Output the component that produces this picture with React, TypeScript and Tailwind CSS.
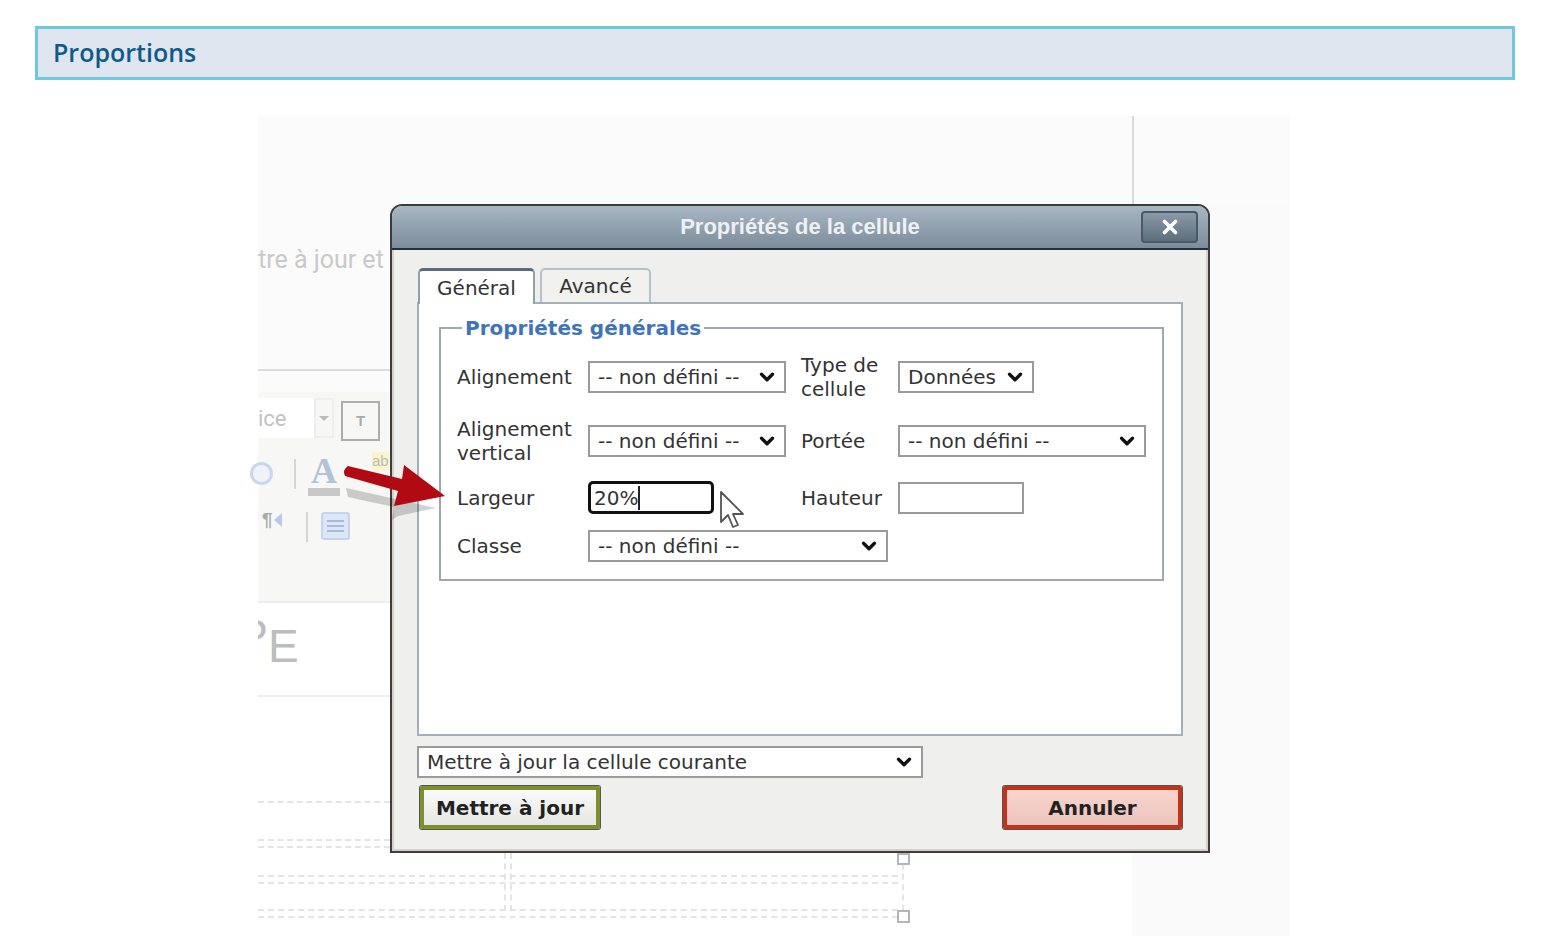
import { ChevronDown, X } from "lucide-react";

const verdana = "font-['DejaVu_Sans',sans-serif]";

function FakeSelect({
  label,
  width,
  className = "",
}: {
  label: string;
  width: string;
  className?: string;
}) {
  return (
    <div
      className={`flex h-[32px] items-center justify-between border-2 border-[#9a9a9a] bg-white pl-[8px] pr-[6px] text-[#333] ${width} ${className}`}
    >
      <span className="whitespace-nowrap">{label}</span>
      <ChevronDown size={22} strokeWidth={3.6} className="text-[#111]" />
    </div>
  );
}

function Arrow() {
  return (
    <svg
      className="absolute left-[84px] top-[346px] overflow-visible"
      width="104"
      height="50"
      viewBox="0 0 104 50"
    >
      <path
        d="M6 21 L96 41 L58 49 L52 53 L54 40 L8 30 Z"
        fill="#000"
        opacity="0.18"
        transform="translate(-2 5)"
      />
      <path
        d="M6 4 L60 17 L62 3 L103 34 L52 44 L56 29 L3 14 Q0 8 6 4 Z"
        fill="#b10a12"
      />
    </svg>
  );
}

function Cursor() {
  return (
    <svg
      className="absolute left-[461px] top-[374px]"
      width="28"
      height="42"
      viewBox="0 0 28 42"
    >
      <path
        d="M2 2 L2 32 L9 25 L14 37 L19 35 L14 24 L24 24 Z"
        fill="#fff"
        stroke="#555"
        strokeWidth="1.8"
        strokeLinejoin="round"
      />
    </svg>
  );
}

function Backdrop() {
  return (
    <>
      {/* editor page behind the dialog */}
      <div className="absolute left-[874px] top-0 h-[88px] w-[2px] bg-[#d9d9d9]" />
      <div className="absolute left-[845px] top-[737px] h-[83px] w-[27px] bg-[#e6e6e6]" />
      <div className="absolute left-[874px] top-[88px] h-[732px] w-[158px] bg-[#fafafa]" />
      <div className="absolute left-0 top-[128px] whitespace-nowrap font-['Roboto',sans-serif] text-[25px] leading-[32px] text-[#c9c9c9]">
        tre à jour et
      </div>

      <div className="absolute left-0 top-[253px] h-[2px] w-[134px] bg-[#dcdcdc]" />
      <div className="absolute left-0 top-[276px] h-[211px] w-[134px] border-b-2 border-[#ececec] bg-[#f7f7f5]">
        <div className="absolute left-0 top-[6px] flex h-[40px] w-[56px] items-center bg-white font-['Roboto',sans-serif] text-[22px] text-[#c2c2c2]">
          ice
        </div>
        <div className="absolute left-[56px] top-[6px] flex h-[40px] w-[20px] items-center justify-center border-2 border-[#eeeeee]">
          <div className="h-0 w-0 border-x-[5px] border-t-[5px] border-x-transparent border-t-[#bbb]" />
        </div>
        <div className="absolute left-[83px] top-[9px] flex h-[40px] w-[39px] items-center justify-center border-2 border-[#adadad] font-['Liberation_Sans',sans-serif] text-[15px] font-bold text-[#aaa]">
          T
        </div>
        <div className="absolute left-[-8px] top-[70px] h-[23px] w-[23px] rounded-full border-[3px] border-[#c9d6ee] bg-[#eef2fa]" />
        <div className="absolute left-[36px] top-[67px] h-[30px] w-[2px] bg-[#d6d6d6]" />
        <div className="absolute left-[53px] top-[60px] font-['Liberation_Serif',serif] text-[36px] font-bold leading-[38px] text-[#b3c1da]">
          A
        </div>
        <div className="absolute left-[50px] top-[96px] h-[8px] w-[32px] bg-[#c8c8c8]" />
        <div className="absolute left-[114px] top-[60px] bg-[#f6f6c8] font-['Liberation_Sans',sans-serif] text-[15px] leading-[18px] text-[#bbb]">
          ab
        </div>
        <div className="absolute left-[4px] top-[114px] flex items-center font-['Liberation_Sans',sans-serif] text-[19px] font-bold text-[#aaa]">
          ¶<span className="ml-[1px] h-0 w-0 border-y-[7px] border-r-[8px] border-y-transparent border-r-[#b8c8e8]" />
        </div>
        <div className="absolute left-[48px] top-[120px] h-[30px] w-[2px] bg-[#d6d6d6]" />
        <div className="absolute left-[63px] top-[120px] flex h-[28px] w-[29px] flex-col justify-center gap-[3px] rounded-[3px] border-2 border-[#c6d3ec] bg-[#dde6f7] px-[4px]">
          <div className="h-[2px] bg-[#a9bbdc]" />
          <div className="h-[2px] bg-[#a9bbdc]" />
          <div className="h-[2px] bg-[#a9bbdc]" />
        </div>
      </div>
      <div className="absolute left-0 top-[487px] h-[94px] w-[134px] border-b-2 border-[#efefef] bg-white">
        <div className="absolute left-[-14px] top-[7px] w-[60px] overflow-hidden whitespace-nowrap font-['Liberation_Sans',sans-serif] text-[46px] leading-[52px] text-[#bdbdbd]">
          <span className="ml-[14px] inline-block w-[10px] overflow-hidden text-right" dir="rtl">P</span>E
        </div>
      </div>
      <div className="absolute left-0 top-[581px] h-[239px] w-[874px] bg-white" />

      {/* table guides */}
      <div className="absolute left-0 top-[685px] h-0 w-[132px] border-t-2 border-dashed border-[#e4e4e4]" />
      <div className="absolute left-0 top-[723px] h-0 w-[132px] border-t-2 border-dashed border-[#e4e4e4]" />
      <div className="absolute left-0 top-[730px] h-0 w-[132px] border-t-2 border-dashed border-[#e4e4e4]" />
      <div className="absolute left-0 top-[759px] h-0 w-[640px] border-t-2 border-dashed border-[#e4e4e4]" />
      <div className="absolute left-0 top-[766px] h-0 w-[640px] border-t-2 border-dashed border-[#e4e4e4]" />
      <div className="absolute left-0 top-[793px] h-0 w-[640px] border-t-2 border-dashed border-[#e4e4e4]" />
      <div className="absolute left-0 top-[800px] h-0 w-[640px] border-t-2 border-dashed border-[#e4e4e4]" />
      <div className="absolute left-[246px] top-[737px] h-[58px] w-0 border-l-2 border-dashed border-[#e4e4e4]" />
      <div className="absolute left-[252px] top-[737px] h-[58px] w-0 border-l-2 border-dashed border-[#e4e4e4]" />
      <div className="absolute left-[644px] top-[737px] h-[58px] w-0 border-l-2 border-dashed border-[#e4e4e4]" />
      <div className="absolute left-[639px] top-[737px] h-[12px] w-[13px] border-2 border-[#b5b5b5] bg-white" />
      <div className="absolute left-[639px] top-[794px] h-[13px] w-[13px] border-2 border-[#b5b5b5] bg-white" />
    </>
  );
}

function Dialog() {
  return (
    <div
      className={`absolute left-[132px] top-[88px] flex h-[649px] w-[820px] flex-col rounded-t-[12px] border-2 border-[#3d3d3d] bg-[#efefed] text-[20px] leading-[24px] ${verdana}`}
    >
      <div className="relative flex h-[44px] shrink-0 items-center justify-center rounded-t-[10px] border-b-2 border-[#23303a] bg-linear-to-b from-[#a9b7c3] to-[#7b8c9b]">
        <span className="font-['Liberation_Sans',sans-serif] text-[22px] font-bold text-[#eef1f3]">
          Propriétés de la cellule
        </span>
        <div className="absolute right-[10px] top-[5px] flex h-[32px] w-[57px] items-center justify-center rounded-[4px] border-2 border-[#4a5966] bg-linear-to-b from-[#8a9aa8] to-[#5d6e7c]">
          <X size={22} strokeWidth={4} className="text-white" />
        </div>
      </div>

      <div className="flex min-h-0 flex-1 flex-col border-x-2 border-b-2 border-[#d8cfc8] px-[23px] pt-[16px]">
        <div className="relative z-10 flex h-[36px] shrink-0 items-end gap-[5px] pl-[1px] text-[#333]">
          <div className="mb-[-2px] flex h-[36px] w-[117px] items-center justify-center rounded-t-[5px] border-x-2 border-t-[3px] border-[#8fa0ae] border-t-[#5b6b7a] bg-white">
            Général
          </div>
          <div className="flex h-[34px] w-[111px] items-center justify-center rounded-t-[5px] border-x-2 border-t-2 border-[#b5c2cc] bg-[#f1f1ee]">
            Avancé
          </div>
        </div>

        <div className="h-[434px] shrink-0 border-2 border-[#a3b0ba] bg-white px-[20px] pt-[12px]">
          <fieldset className="h-[265px] border-2 border-[#a0a8ad] pl-[16px] pr-[16px]">
            <legend className="ml-[5px] px-[3px] text-[20px] font-bold leading-[24px] text-[#3f74b8]">
              Propriétés générales
            </legend>
            <div className="mt-[13px] grid grid-cols-[131px_213px_97px_auto] items-center text-[#333]">
              <div>Alignement</div>
              <FakeSelect label="-- non défini --" width="w-[198px]" />
              <div>
                Type de
                <br />
                cellule
              </div>
              <FakeSelect label="Données" width="w-[136px]" />

              <div className="mt-[16px]">
                Alignement
                <br />
                vertical
              </div>
              <FakeSelect label="-- non défini --" width="w-[198px]" className="mt-[16px]" />
              <div className="mt-[16px]">Portée</div>
              <FakeSelect label="-- non défini --" width="w-[248px]" className="mt-[16px]" />

              <div className="mt-[16px]">Largeur</div>
              <div className="mt-[16px] flex h-[33px] w-[126px] items-center rounded-[5px] border-[3px] border-[#111] bg-white pl-[3px]">
                <span>20%</span>
                <span className="h-[24px] w-[2px] bg-[#222]" />
              </div>
              <div className="mt-[16px]">Hauteur</div>
              <div className="mt-[16px] h-[32px] w-[126px] border-2 border-[#9a9a9a] bg-white" />

              <div className="mt-[16px]">Classe</div>
              <FakeSelect label="-- non défini --" width="w-[300px]" className="col-span-3 mt-[16px]" />
            </div>
          </fieldset>
        </div>

        <FakeSelect
          label="Mettre à jour la cellule courante"
          width="w-[506px]"
          className="mt-[10px] shrink-0"
        />

        <div className="mt-[8px] flex shrink-0 justify-between pl-[3px] pr-[1px]">
          <div className="flex h-[43px] w-[180px] items-center justify-center rounded-[2px] border-[4px] border-[#7e8f2d] bg-linear-to-b from-[#fafafa] to-[#e6e6e4] font-bold text-[#222] shadow-[0_0_0_1px_#555]">
            Mettre à jour
          </div>
          <div className="flex h-[43px] w-[179px] items-center justify-center rounded-[2px] border-[4px] border-[#c5321a] bg-linear-to-b from-[#f7d5cd] to-[#ecc4bd] font-bold text-[#222] shadow-[0_0_0_1px_#555]">
            Annuler
          </div>
        </div>
      </div>
    </div>
  );
}

export default function App() {
  return (
    <div className="h-[936px] w-[1556px] overflow-hidden bg-white pt-[26px]">
      <div className="mx-[35px] flex h-[54px] w-[1480px] items-center border-[3px] border-[#6fc8dc] bg-[#dfe6ef] pl-[15px] font-['Open_Sans',sans-serif] text-[25px] font-semibold text-[#0f5a8c]">
        Proportions
      </div>
      <div className="relative ml-[258px] mt-[36px] h-[820px] w-[1032px] bg-[#fbfbfb]">
        <Backdrop />
        <Dialog />
        <Arrow />
        <Cursor />
      </div>
    </div>
  );
}
